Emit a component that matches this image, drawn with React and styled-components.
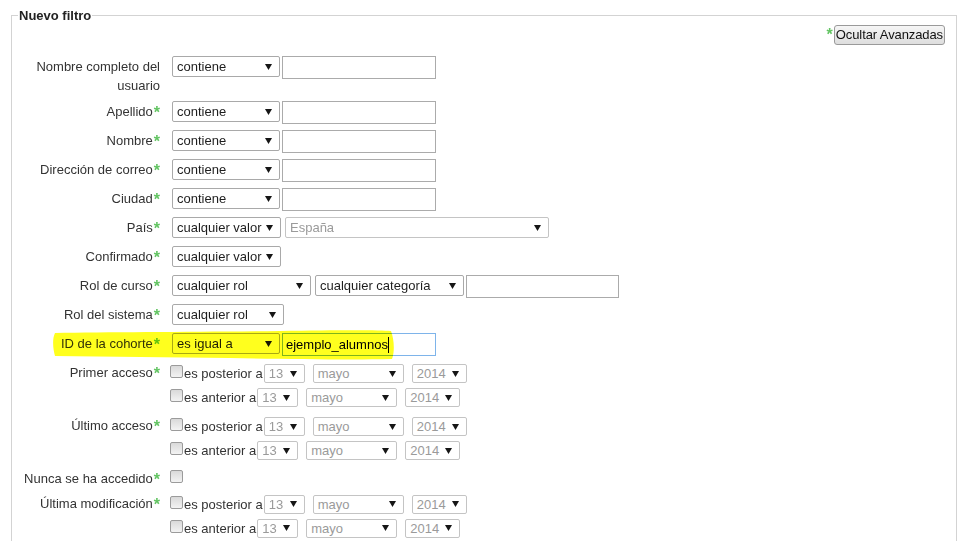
import React from "react";
import styled, { createGlobalStyle } from "styled-components";

const GlobalStyle = createGlobalStyle`
  html, body {
    margin: 0;
    padding: 0;
    overflow: hidden;
    background: #fff;
  }
  body {
    font-family: "Liberation Sans", Arial, sans-serif;
    font-size: 13px;
    color: #333;
  }
`;

const Page = styled.div`
  padding: 8px 8px 0 11px;
  width: 965px;
  height: 541px;
  box-sizing: border-box;
`;

const Fieldset = styled.fieldset`
  margin: 0;
  border: 1px solid #d3d3d3;
  padding: 0 10px 80px 6px;
  min-width: 0;
`;

const Legend = styled.legend`
  font-weight: bold;
  color: #222;
  padding: 0 1px;
  line-height: 15px;
`;

const Toolbar = styled.div`
  display: flex;
  justify-content: flex-end;
  align-items: center;
  margin-top: 2px;
  margin-bottom: 11px;
  padding-right: 1px;
`;

const Star = styled.span`
  color: #62c462;
  font-size: 16px;
  font-weight: bold;
  line-height: 0;
  vertical-align: -2px;
  margin-left: ${(p) => p.$ml ?? 1}px;
  margin-right: ${(p) => p.$mr ?? 0}px;
`;

const Button = styled.button`
  font-family: "Liberation Sans", Arial, sans-serif;
  font-size: 13px;
  color: #111;
  height: 20px;
  line-height: 16px;
  padding: 0 1px;
  letter-spacing: -0.1px;
  border: 1px solid #9a9a9a;
  border-radius: 3px;
  background: linear-gradient(#f6f6f6, #dedede);
`;

const Row = styled.div`
  display: grid;
  grid-template-columns: 142px auto;
  column-gap: 12px;
  margin-bottom: ${(p) => p.$mb ?? 6}px;
  position: relative;
`;

const Label = styled.div`
  text-align: right;
  line-height: 18.5px;
  padding-top: 2px;
  color: #333;
`;

const Controls = styled.div`
  display: flex;
  align-items: flex-start;
  min-height: ${(p) => (p.$compact ? 18 : 23)}px;
`;

const SelectBox = styled.div`
  display: flex;
  align-items: center;
  justify-content: space-between;
  box-sizing: border-box;
  width: ${(p) => p.$w}px;
  height: ${(p) => (p.$small ? 19 : 21)}px;
  margin-left: ${(p) => p.$ml ?? 0}px;
  padding: 0 7px 0 4px;
  border: 1px solid ${(p) => (p.$disabled ? "#c4c4c4" : "#a9a9a9")};
  border-radius: 2px;
  background: #fff;
  color: ${(p) => (p.$disabled ? "#9a9a9a" : "#1e1e1e")};
  white-space: nowrap;
  flex-shrink: 0;
`;

const Arrow = styled.svg`
  flex-shrink: 0;
  display: block;
`;

const TextBox = styled.div`
  box-sizing: border-box;
  width: ${(p) => p.$w}px;
  height: 23px;
  margin-left: ${(p) => p.$ml ?? 0}px;
  padding: 0 3px;
  border: 1px solid ${(p) => (p.$focused ? "#7eb4ea" : "#ababab")};
  background: #fff;
  color: #000;
  display: flex;
  align-items: center;
  flex-shrink: 0;
`;

const Caret = styled.span`
  display: inline-block;
  width: 1px;
  height: 16px;
  background: #000;
`;

const DateStack = styled.div`
  display: flex;
  flex-direction: column;
  gap: 1px;
  margin-left: -2px;
`;

const DateLine = styled.div`
  display: flex;
  align-items: center;
  height: 23px;
`;

const Check = styled.span`
  display: inline-block;
  box-sizing: border-box;
  width: 13px;
  height: 13px;
  border: 1px solid #9b9b9b;
  border-radius: 2px;
  background: linear-gradient(#d9d9d9, #f3f3f3);
  align-self: flex-start;
  margin-top: ${(p) => p.$mt ?? 3}px;
  margin-right: 1px;
  flex-shrink: 0;
`;

const CheckText = styled.span`
  color: #333;
  margin-right: 1px;
  white-space: nowrap;
`;

const Highlight = styled.svg`
  position: absolute;
  left: 32px;
  top: -4px;
  pointer-events: none;
  mix-blend-mode: multiply;
`;

function Select({ w, children, ...rest }) {
  return (
    <SelectBox $w={w} {...rest}>
      <span>{children}</span>
      <Arrow width="7" height="6" viewBox="0 0 7 6">
        <polygon points="0,0 7,0 3.5,6" fill="#161616" />
      </Arrow>
    </SelectBox>
  );
}

function DateSelects() {
  return (
    <>
      <Select w={41} $small $disabled>13</Select>
      <Select w={91} $small $disabled $ml={8}>mayo</Select>
      <Select w={55} $small $disabled $ml={8}>2014</Select>
    </>
  );
}

function DateGroup() {
  return (
    <DateStack>
      <DateLine>
        <Check />
        <CheckText>es posterior a</CheckText>
        <DateSelects />
      </DateLine>
      <DateLine>
        <Check />
        <CheckText>es anterior a</CheckText>
        <DateSelects />
      </DateLine>
    </DateStack>
  );
}

function FieldLabel({ children, star = true }) {
  return (
    <Label>
      {children}
      {star && <Star>*</Star>}
    </Label>
  );
}

const textRows = ["Apellido", "Nombre", "Dirección de correo", "Ciudad"];

export default function App() {
  return (
    <Page>
      <GlobalStyle />
      <Fieldset>
        <Legend>Nuevo filtro</Legend>
        <Toolbar>
          <Star $ml={0} $mr={1}>*</Star>
          <Button>Ocultar Avanzadas</Button>
        </Toolbar>

        <Row>
          <FieldLabel star={false}>Nombre completo del usuario</FieldLabel>
          <Controls>
            <Select w={108}>contiene</Select>
            <TextBox $w={154} $ml={2} />
          </Controls>
        </Row>

        {textRows.map((t) => (
          <Row key={t}>
            <FieldLabel>{t}</FieldLabel>
            <Controls>
              <Select w={108}>contiene</Select>
              <TextBox $w={154} $ml={2} />
            </Controls>
          </Row>
        ))}

        <Row>
          <FieldLabel>País</FieldLabel>
          <Controls>
            <Select w={109}>cualquier valor</Select>
            <Select w={264} $ml={4} $disabled>España</Select>
          </Controls>
        </Row>

        <Row>
          <FieldLabel>Confirmado</FieldLabel>
          <Controls>
            <Select w={109}>cualquier valor</Select>
          </Controls>
        </Row>

        <Row>
          <FieldLabel>Rol de curso</FieldLabel>
          <Controls>
            <Select w={139}>cualquier rol</Select>
            <Select w={149} $ml={4}>cualquier categoría</Select>
            <TextBox $w={153} $ml={2} />
          </Controls>
        </Row>

        <Row>
          <FieldLabel>Rol del sistema</FieldLabel>
          <Controls>
            <Select w={112}>cualquier rol</Select>
          </Controls>
        </Row>

        <Row>
          <FieldLabel>ID de la cohorte</FieldLabel>
          <Controls>
            <Select w={108}>es igual a</Select>
            <TextBox $w={154} $ml={2} $focused>
              ejemplo_alumnos
              <Caret />
            </TextBox>
          </Controls>
          <Highlight width="346" height="33" viewBox="0 0 346 33">
            <path
              d="M5,4 C60,3 150,3 230,2 C290,1 330,1 341,2 C344,10 345,22 342,30 C300,31 240,30 180,29 C120,28 60,28 5,27 C3,20 2,10 5,4 Z"
              fill="#ffff1e"
            />
          </Highlight>
        </Row>

        <Row>
          <FieldLabel>Primer acceso</FieldLabel>
          <Controls>
            <DateGroup />
          </Controls>
        </Row>

        <Row>
          <FieldLabel>Último acceso</FieldLabel>
          <Controls>
            <DateGroup />
          </Controls>
        </Row>

        <Row $mb={4}>
          <FieldLabel>Nunca se ha accedido</FieldLabel>
          <Controls $compact>
            <DateStack>
              <Check $mt={2} />
            </DateStack>
          </Controls>
        </Row>

        <Row>
          <FieldLabel>Última modificación</FieldLabel>
          <Controls>
            <DateGroup />
          </Controls>
        </Row>
      </Fieldset>
    </Page>
  );
}
